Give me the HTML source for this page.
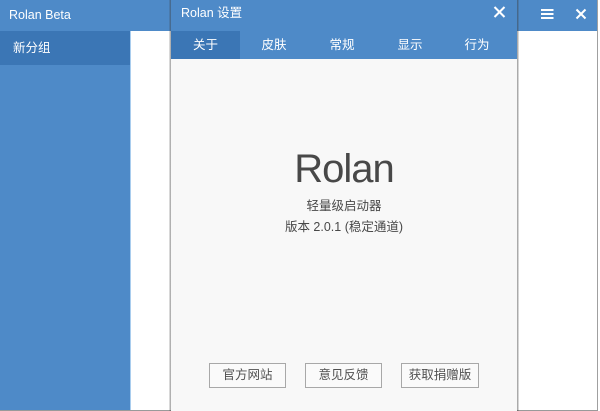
<!DOCTYPE html>
<html><head><meta charset="utf-8">
<style>
html,body{margin:0;padding:0;width:600px;height:411px;overflow:hidden;background:#fff}
body{position:relative;font-family:"Liberation Sans","Noto Sans CJK SC",sans-serif}
div{position:absolute;box-sizing:border-box;white-space:nowrap}
.t{color:#fff;font-size:12.5px;line-height:16px;text-align:center}
.b{top:363px;height:25px;border:1px solid #a8a8a8;background:#fafafa;color:#505050;font-size:12.5px;line-height:23px;text-align:center}
.c{color:#484848;text-align:center;left:171px;width:346px}
</style></head><body>
<div style="left:0;top:0;width:598px;height:31px;background:#4e8ac8"></div>
<div style="left:0;top:31px;width:130px;height:379px;background:#4e8ac8"></div>
<div style="left:0;top:31px;width:130px;height:34px;background:#3b76b5"></div>
<div style="left:130px;top:31px;width:1px;height:379px;background:#a9cdee"></div>
<div style="left:9px;top:7px;color:#fff;font-size:12.5px;line-height:16px">Rolan Beta</div>
<div style="left:13px;top:40px;color:#fff;font-size:12.5px;line-height:16px">新分组</div>
<svg style="position:absolute;left:541px;top:9px" width="13" height="11"><path d="M0 1H12.500M0 5H12.500M0 9H12.500" stroke="#fff" stroke-width="2"/></svg>
<svg style="position:absolute;left:575px;top:8px" width="12" height="12"><path d="M1.500 1.500L10.500 10.500M10.500 1.500L1.500 10.500" stroke="#fff" stroke-width="2"/></svg>
<div style="left:597px;top:0;width:1px;height:411px;background:#a0a0a0"></div>
<div style="left:598px;top:0;width:2px;height:411px;background:#fff"></div>
<div style="left:0;top:410px;width:598px;height:1px;background:#9a9a9a"></div>
<div style="left:169px;top:0;width:2px;height:411px;background:linear-gradient(90deg,rgba(60,60,60,.1),rgba(60,60,60,.5))"></div>
<div style="left:517px;top:0;width:2px;height:411px;background:linear-gradient(90deg,rgba(60,60,60,.55),rgba(60,60,60,.1))"></div>
<div style="left:171px;top:0;width:346px;height:411px;background:#f8f8f8"></div>
<div style="left:171px;top:0;width:346px;height:59px;background:#4e8ac8"></div>
<div style="left:171px;top:31px;width:69px;height:28px;background:#3b76b5"></div>
<div style="left:181px;top:5px;color:#fff;font-size:12.5px;line-height:16px">Rolan 设置</div>
<svg style="position:absolute;left:493px;top:6px" width="13" height="13"><path d="M1.500 1L11.500 11M11.500 1L1.500 11" stroke="#fff" stroke-width="2"/></svg>
<div class="t" style="left:171px;top:37px;width:69px">关于</div>
<div class="t" style="left:240px;top:37px;width:68px">皮肤</div>
<div class="t" style="left:308px;top:37px;width:68px">常规</div>
<div class="t" style="left:376px;top:37px;width:68px">显示</div>
<div class="t" style="left:444px;top:37px;width:66px">行为</div>
<div class="c" style="top:144px;font-size:40px;line-height:50px;letter-spacing:-1px">Rolan</div>
<div class="c" style="top:198px;font-size:12.5px;line-height:16px">轻量级启动器</div>
<div class="c" style="top:219px;font-size:12.5px;line-height:16px">版本 2.0.1 (稳定通道)</div>
<div class="b" style="left:209px;width:77px">官方网站</div>
<div class="b" style="left:305px;width:77px">意见反馈</div>
<div class="b" style="left:401px;width:78px">获取捐赠版</div>
</body></html>
